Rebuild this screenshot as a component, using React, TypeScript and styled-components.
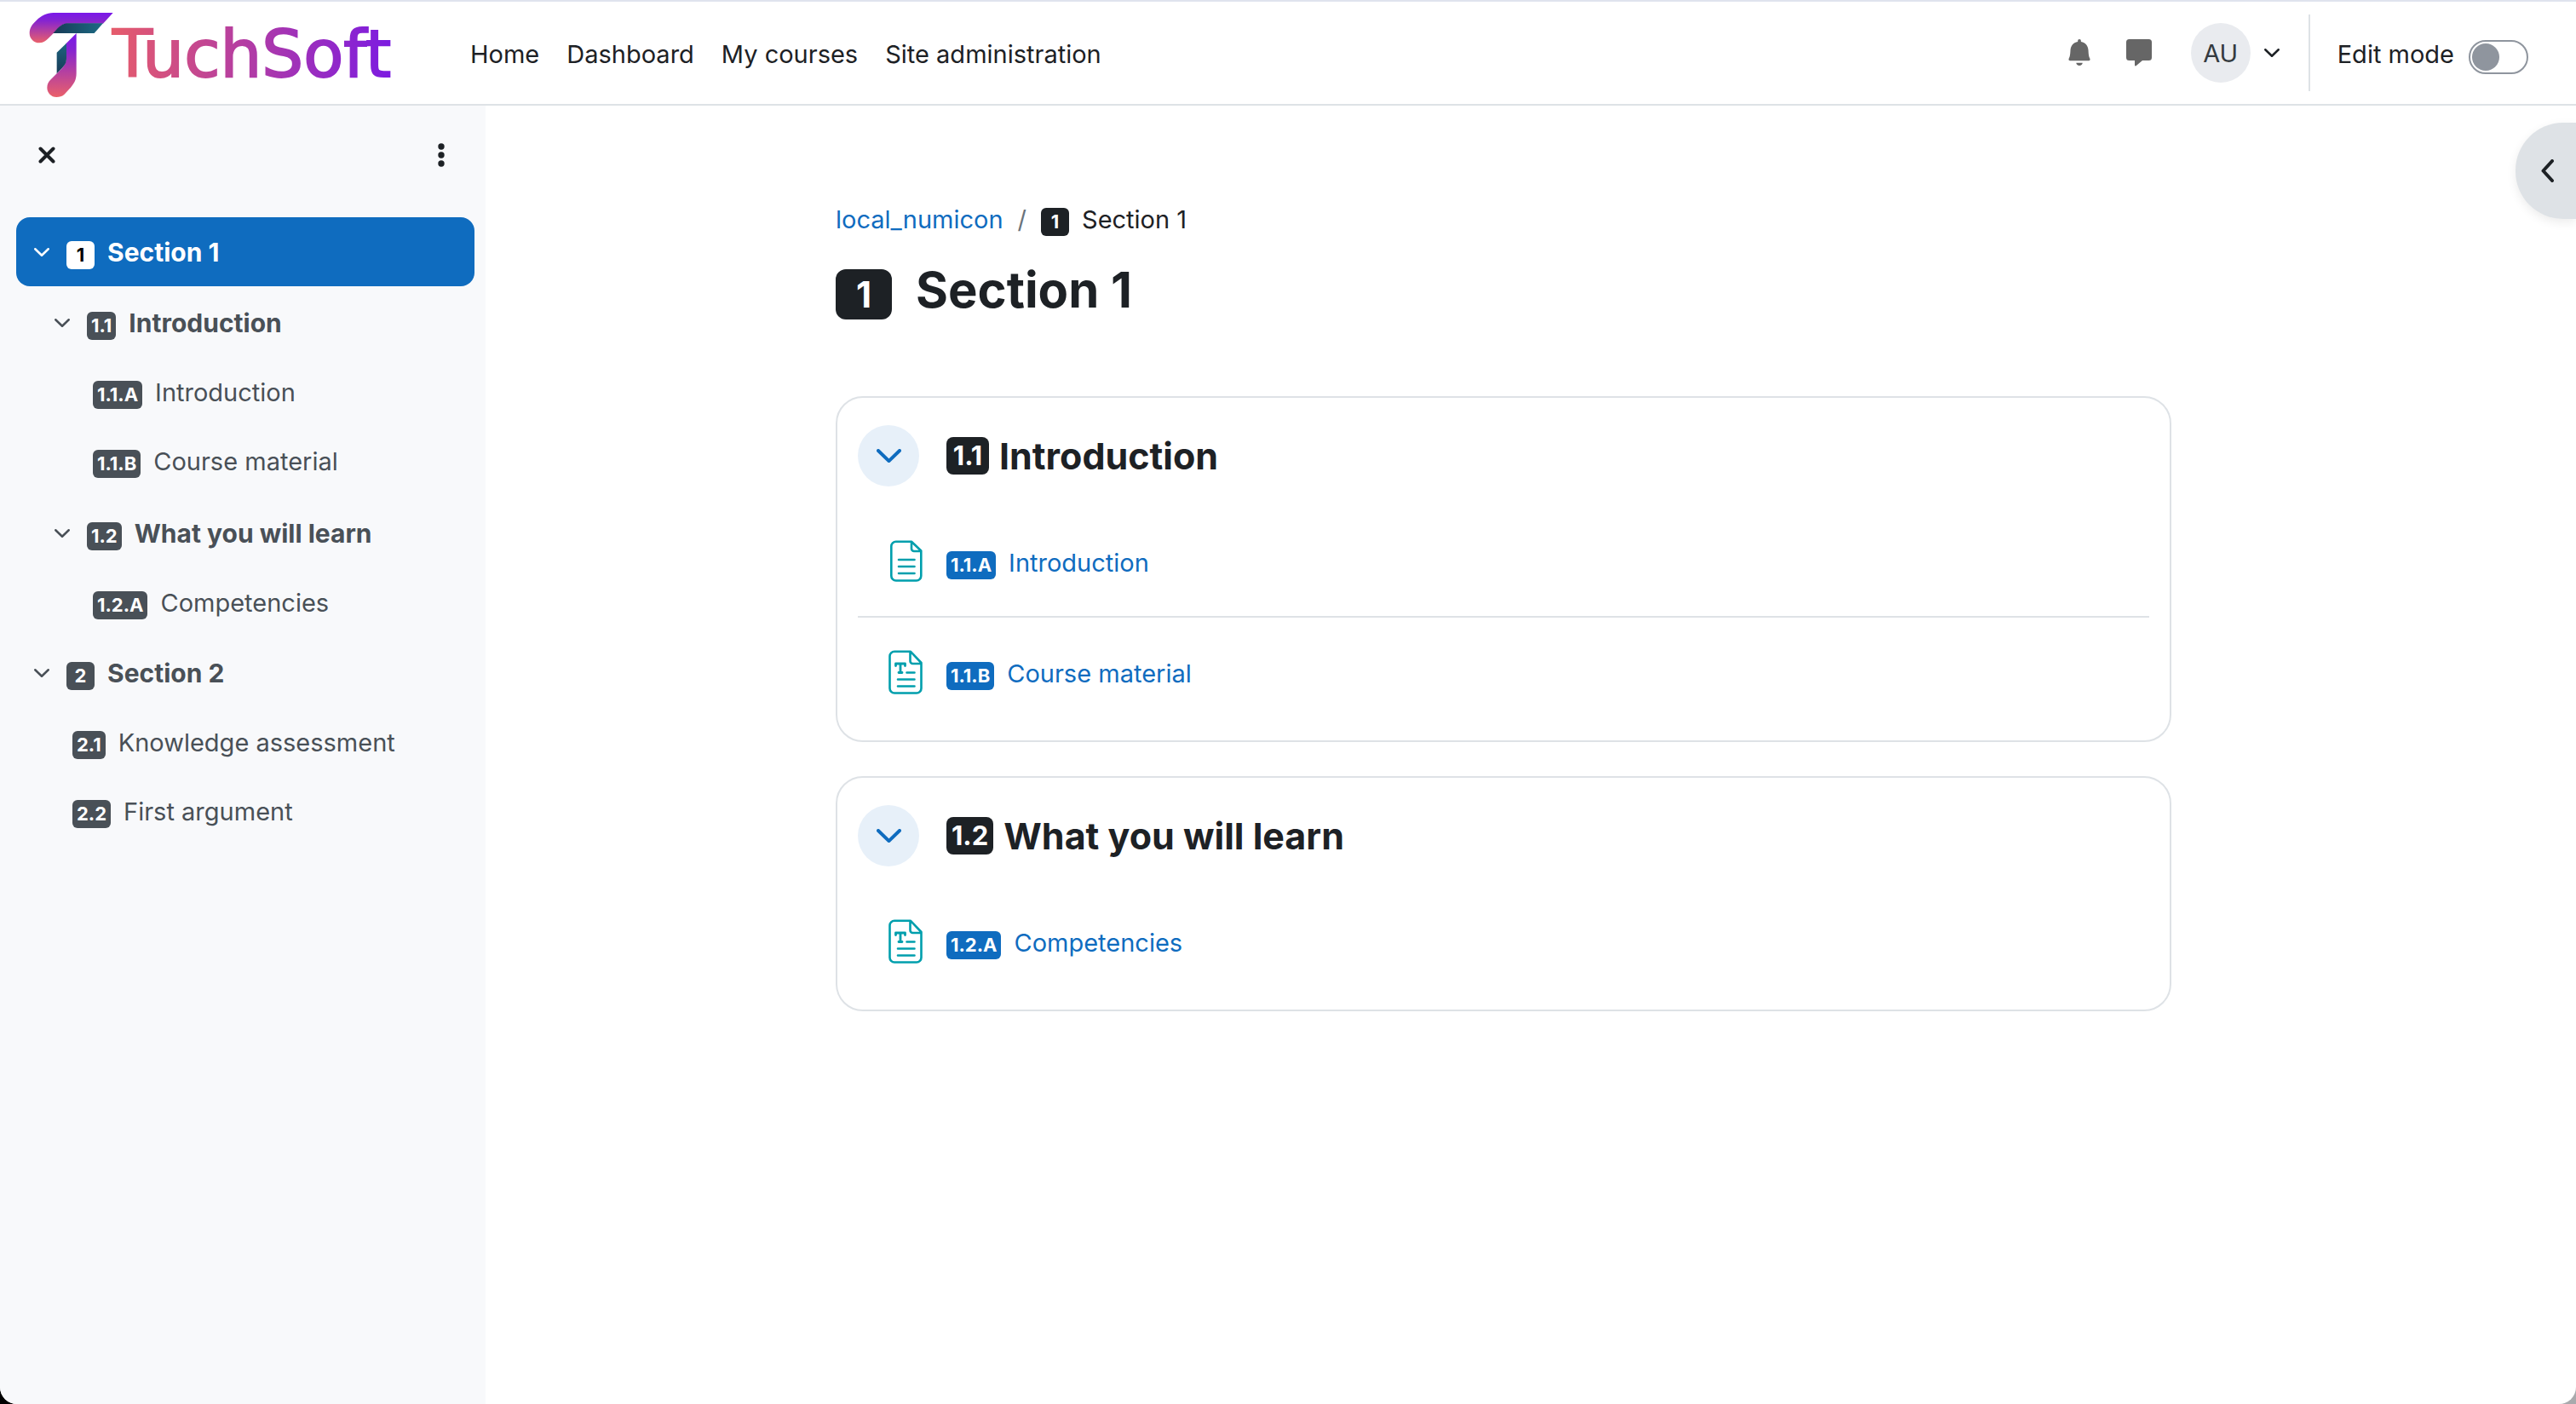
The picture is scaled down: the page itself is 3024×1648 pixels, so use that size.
import React from "react";
import styled, { createGlobalStyle, css } from "styled-components";

const color = {
  ink: "#1d2125",
  muted: "#495057",
  blue: "#0f6cbf",
  line: "#dee2e6",
  panel: "#f8f9fb",
};

const GlobalStyle = createGlobalStyle`
  *, *::before, *::after { box-sizing: border-box; }
  body {
    margin: 0;
    background: linear-gradient(90deg, #000 50%, #a9aaad 50%);
    color: ${color.ink};
    font-family: Inter, "Liberation Sans", sans-serif;
    font-size: 29px;
    line-height: 45px;
  }
  h1, h2, ul, ol { margin: 0; padding: 0; }
  ul, ol { list-style: none; }
  a { color: inherit; text-decoration: none; }
  button {
    border: 0;
    padding: 0;
    background: none;
    color: inherit;
    font: inherit;
    cursor: pointer;
  }
  svg { display: block; }
`;

const Page = styled.div`
  display: flex;
  flex-direction: column;
  min-height: 100vh;
  overflow: hidden;
  background: #fff;
  border-radius: 0 0 20px 20px;
`;

/* ---------- top bar ---------- */

const TopBar = styled.header`
  display: flex;
  align-items: center;
  height: 124px;
  padding: 0 56px 0 32px;
  border-top: 2px solid #dfe3ee;
  border-bottom: 2px solid ${color.line};
`;

const Brand = styled.a`
  display: block;
  width: 444px;
  margin-right: 76px;
`;

const TopLinks = styled.nav`
  display: flex;
  gap: 32px;
  margin-right: auto;
  padding-top: 2px;
`;

const Tools = styled.div`
  display: flex;
  align-items: center;
`;

const ToolButton = styled.button`
  display: grid;
  place-items: center;
  width: 70px;
  height: 70px;
  color: #666;
`;

const UserMenu = styled.button`
  display: flex;
  align-items: center;
  gap: 16px;
  margin: 0 34px 0 26px;
`;

const Avatar = styled.span`
  display: grid;
  place-items: center;
  width: 70px;
  height: 70px;
  border-radius: 50%;
  background: #e9ebef;
  color: #343a40;
`;

const EditMode = styled.label`
  display: flex;
  align-items: center;
  gap: 17px;
  height: 90px;
  padding: 2px 0 0 32px;
  border-left: 2px solid ${color.line};
`;

const Switch = styled.input`
  appearance: none;
  width: 70px;
  height: 40px;
  margin: 8px 0 0;
  padding: 2px;
  border: 2px solid #8f959e;
  border-radius: 20px;
  cursor: pointer;

  &::before {
    content: "";
    display: block;
    width: 32px;
    height: 32px;
    border-radius: 50%;
    background: #8f959e;
  }
  &:checked::before {
    margin-left: auto;
  }
`;

/* ---------- layout ---------- */

const Columns = styled.div`
  display: flex;
  flex: 1;
`;

const Sidebar = styled.aside`
  width: 570px;
  flex: none;
  padding: 22px 13px 22px 19px;
  background: ${color.panel};
`;

const SidebarHead = styled.div`
  display: flex;
  justify-content: space-between;
  margin-bottom: 37px;
  padding-right: 3px;
`;

const HeadButton = styled.button`
  display: grid;
  place-items: center;
  width: 72px;
  height: 72px;
`;

const Main = styled.main`
  position: relative;
  flex: 1;
  padding: 111px 64px 64px 0;
`;

const Content = styled.div`
  max-width: 1568px;
  margin: 0 auto;
`;

const DrawerToggle = styled.button`
  position: absolute;
  top: 20px;
  right: 0;
  display: flex;
  align-items: center;
  width: 71px;
  height: 113px;
  padding-left: 30px;
  border-radius: 56px 0 0 56px;
  background: ${color.line};
  box-shadow: 0 4px 12px rgba(0, 0, 0, 0.08);
`;

/* ---------- number badge ---------- */

type Tone = "dark" | "muted" | "blue" | "light";
type Size = "sm" | "md" | "lg";

const tones: Record<Tone, [string, string]> = {
  dark: [color.ink, "#fff"],
  muted: [color.muted, "#fff"],
  blue: [color.blue, "#fff"],
  light: ["#fff", "#000"],
};

const sizes = {
  sm: css`
    min-width: 33px;
    padding: 5px;
    border-radius: 6px;
    font-size: 22px;
    line-height: 23px;
  `,
  md: css`
    min-width: 50px;
    padding: 6px;
    border-radius: 8px;
    font-size: 31px;
    line-height: 32px;
  `,
  lg: css`
    min-width: 66px;
    padding: 8px;
    border-radius: 12px;
    font-size: 42px;
    line-height: 43px;
  `,
};

const Badge = styled.span<{ $tone: Tone; $size?: Size }>`
  display: inline-block;
  background: ${(p) => tones[p.$tone][0]};
  color: ${(p) => tones[p.$tone][1]};
  font-weight: 700;
  text-align: center;
  ${(p) => sizes[p.$size ?? "sm"]}
`;

/* ---------- course index ---------- */

const IndexRow = styled.div<{ $depth: number; $leaf?: boolean; $active?: boolean }>`
  display: flex;
  align-items: center;
  padding: 17px 16px;
  padding-left: ${(p) => (p.$leaf ? 42 : 14) + p.$depth * 24}px;
  border-radius: 16px;
  background: ${(p) => (p.$active ? color.blue : "transparent")};
  color: ${(p) => (p.$active ? "#fff" : color.muted)};
  font-size: ${(p) => (p.$leaf ? 29 : 30)}px;
  font-weight: ${(p) => (p.$leaf ? 400 : 700)};
`;

const Fold = styled.button`
  display: grid;
  place-items: center;
  width: 32px;
  height: 32px;
  margin-right: 13px;
`;

const NumberedLink = styled.a`
  display: flex;
  align-items: baseline;
  gap: 15px;
  padding-top: 2px;
`;

const SubSection = styled.li`
  padding: 2px 0;
`;

/* ---------- content ---------- */

const Crumbs = styled.ol`
  display: flex;
  align-items: baseline;
  gap: 17px;
  margin-bottom: 24px;

  a { color: ${color.blue}; }
`;

const Crumb = styled.li`
  display: flex;
  align-items: baseline;
  gap: 15px;
`;

const Slash = styled.span`
  color: #6a737b;
`;

const Title = styled.h1`
  display: flex;
  align-items: baseline;
  gap: 28px;
  margin-bottom: 89px;
  font-size: 58px;
  line-height: 72px;
`;

const Card = styled.section`
  margin-bottom: 40px;
  padding: 32px 24px 16px;
  border: 2px solid ${color.line};
  border-radius: 32px;
`;

const CardHead = styled.div`
  display: flex;
  align-items: center;
  gap: 32px;
  margin-bottom: 24px;
`;

const RoundButton = styled.button`
  display: grid;
  place-items: center;
  width: 72px;
  height: 72px;
  border-radius: 50%;
  background: #e7f0f9;
  color: ${color.blue};
`;

const CardTitle = styled.h2`
  display: flex;
  align-items: center;
  gap: 12px;
  font-size: 43px;
  line-height: 54px;
`;

const Activity = styled.li`
  display: flex;
  align-items: center;
  gap: 22px;
  height: 128px;
  padding-left: 32px;
  color: ${color.blue};

  & + & {
    height: 130px;
    border-top: 2px solid ${color.line};
  }
`;

/* ---------- drawings ---------- */

const Logo = () => (
  <svg width="444" height="104" viewBox="0 0 444 104" role="img" aria-label="TuchSoft">
    <defs>
      <linearGradient id="arm" x1="0" y1="0" x2="0" y2="1">
        <stop offset="0" stopColor="#7a17ea" />
        <stop offset="0.25" stopColor="#8423d2" />
        <stop offset="1" stopColor="#ea606a" />
      </linearGradient>
      <linearGradient id="shade" x1="0" y1="0" x2="1" y2="0">
        <stop offset="0" stopColor="#173a56" />
        <stop offset="1" stopColor="#1d6b84" />
      </linearGradient>
      <linearGradient id="shadeDown" x1="0" y1="0" x2="0" y2="1">
        <stop offset="0" stopColor="#1d6580" />
        <stop offset="1" stopColor="#173a56" />
      </linearGradient>
      <linearGradient id="word" gradientUnits="userSpaceOnUse" x1="98" y1="0" x2="442" y2="0">
        <stop offset="0" stopColor="#e65c6b" />
        <stop offset="1" stopColor="#7718e6" />
      </linearGradient>
    </defs>
    <g transform="translate(1 3) scale(0.3333) translate(-36 -39)">
      <path d="M335 45H125C100 45 82 56 66 71C54 82 41 95 41 116C41 136 56 151 75 151C88 151 97 145 105 137L152 91Q160 83 172 83H300Z" fill="url(#arm)" />
      <path d="M300 82H178C160 82 150 90 140 100L124 117H269Z" fill="url(#shade)" />
      <path d="M206 117V258C206 282 197 295 186 308L163 333C155 340 147 342 136 342C117 342 103 327 103 309C103 297 108 288 116 280L152 244C164 232 170 222 170 205V153Z" fill="url(#arm)" />
      <path d="M171 152L137 185V259L156 239C167 228 171 220 171 205Z" fill="url(#shadeDown)" />
    </g>
    <text x="100" y="80" fill="url(#word)" stroke="url(#word)" strokeWidth="2" fontFamily="DejaVu Sans, sans-serif" fontSize="77">
      TuchSoft
    </text>
  </svg>
);

const Bell = () => (
  <svg width="28" height="38" viewBox="0 0 28 38" fill="currentColor">
    <path d="M14 0a2 2 0 0 1 2 2v1.500c6 1.300 9 6 9.300 12 .3 7 .9 9.500 2 11.500.6 1.500 0 3-1.500 3H2.200c-1.500 0-2.100-1.500-1.500-3 1.100-2 1.700-4.500 2-11.500C3 9.500 6 4.800 12 3.500V2a2 2 0 0 1 2-2zM10 33h8c0 2-1.800 4-4 4s-4-2-4-4z" transform="translate(1 3) scale(0.93 0.84)" />
  </svg>
);

const Bubble = () => (
  <svg width="30" height="38" viewBox="0 0 30 38" fill="currentColor">
    <path d="M3.500 3h23A3.500 3.500 0 0 1 30 6.500v18a3.500 3.500 0 0 1-3.500 3.500H19l-7.500 6.300c-.6.500-1.500.2-1.500-.8V28H3.500A3.500 3.500 0 0 1 0 24.500v-18A3.500 3.500 0 0 1 3.500 3z" />
  </svg>
);

const Chevron = ({ width = 18, stroke = 2.5 }: { width?: number; stroke?: number }) => (
  <svg
    width={width}
    height={(width * 10) / 18}
    viewBox={`0 0 ${width} ${(width * 10) / 18}`}
    fill="none"
    stroke="currentColor"
    strokeWidth={stroke}
    strokeLinecap="round"
    strokeLinejoin="round"
  >
    <path
      d={`M${stroke / 2} ${stroke / 2}L${width / 2} ${(width * 10) / 18 - stroke / 2}L${width - stroke / 2} ${stroke / 2}`}
    />
  </svg>
);

const ChevronLeft = () => (
  <svg width="15" height="27" viewBox="0 0 15 27" fill="none" stroke="currentColor" strokeWidth="4" strokeLinecap="round" strokeLinejoin="round">
    <path d="M13 2L2.500 13.500L13 25" />
  </svg>
);

const Cross = () => (
  <svg width="20" height="20" viewBox="0 0 20 20" stroke="currentColor" strokeWidth="4" strokeLinecap="round">
    <path d="M2.500 2.500L17.500 17.500M17.500 2.500L2.500 17.500" />
  </svg>
);

const Dots = () => (
  <svg width="8" height="28" viewBox="0 0 8 28" fill="currentColor">
    <circle cx="4" cy="4" r="3.700" />
    <circle cx="4" cy="14" r="3.700" />
    <circle cx="4" cy="24" r="3.700" />
  </svg>
);

const PageIcon = ({ kind }: { kind: "page" | "text" }) => (
  <svg width="50" height="56" viewBox="0 0 50 56" fill="none" stroke="#009fad" strokeWidth="2.600" strokeLinecap="round" strokeLinejoin="round">
    {kind === "page" ? (
      <>
        <path d="M31 4.800H12.800a5.500 5.500 0 0 0-5.500 5.500V45a5.500 5.500 0 0 0 5.500 5.500h24a5.500 5.500 0 0 0 5.500-5.500V15.500zM31 4.800V13a3 3 0 0 0 3 3h8" />
        <path d="M16 26h18.500M16 34h18.500M16 42h18.500" />
      </>
    ) : (
      <g transform="translate(0 1)">
        <path d="M30 2.800H11a5.500 5.500 0 0 0-5.500 5.500V46a5.500 5.500 0 0 0 5.500 5.500h26a5.500 5.500 0 0 0 5.500-5.500V16zM29.500 2.800V14a3 3 0 0 0 3 3h10" />
        <path d="M25.500 27.500h9M15 35.500h19.500M15 43.500h19.500" />
        <path d="M12.500 19.500v-2.500h11V19.500M18 17V27.500M16 27.500h4" strokeWidth="2.800" />
      </g>
    )}
  </svg>
);

/* ---------- data ---------- */

type Item = { num: string; name: string; icon?: "page" | "text"; items?: Item[] };

const course: Item[] = [
  {
    num: "1",
    name: "Section 1",
    items: [
      {
        num: "1.1",
        name: "Introduction",
        items: [
          { num: "1.1.A", name: "Introduction", icon: "page" },
          { num: "1.1.B", name: "Course material", icon: "text" },
        ],
      },
      {
        num: "1.2",
        name: "What you will learn",
        items: [{ num: "1.2.A", name: "Competencies", icon: "text" }],
      },
    ],
  },
  {
    num: "2",
    name: "Section 2",
    items: [
      { num: "2.1", name: "Knowledge assessment" },
      { num: "2.2", name: "First argument" },
    ],
  },
];

const current = course[0];

const IndexEntry = ({ item, depth }: { item: Item; depth: number }) => {
  const active = item === current;
  const Wrapper = depth === 1 && item.items ? SubSection : "li";
  return (
    <Wrapper>
      <IndexRow $depth={depth} $leaf={!item.items} $active={active}>
        {item.items && (
          <Fold type="button" aria-label={`Collapse ${item.name}`}>
            <Chevron />
          </Fold>
        )}
        <NumberedLink href="#">
          <Badge $tone={active ? "light" : "muted"}>{item.num}</Badge>
          {item.name}
        </NumberedLink>
      </IndexRow>
      {item.items && (
        <ul>
          {item.items.map((child) => (
            <IndexEntry key={child.num} item={child} depth={depth + 1} />
          ))}
        </ul>
      )}
    </Wrapper>
  );
};

export default function App() {
  return (
    <>
      <GlobalStyle />
      <Page>
        <TopBar>
          <Brand href="#">
            <Logo />
          </Brand>
          <TopLinks>
            <a href="#">Home</a>
            <a href="#">Dashboard</a>
            <a href="#">My courses</a>
            <a href="#">Site administration</a>
          </TopLinks>
          <Tools>
            <ToolButton type="button" aria-label="Notifications">
              <Bell />
            </ToolButton>
            <ToolButton type="button" aria-label="Messages">
              <Bubble />
            </ToolButton>
            <UserMenu type="button" aria-label="User menu">
              <Avatar>AU</Avatar>
              <Chevron width={18} />
            </UserMenu>
            <EditMode htmlFor="edit-mode">
              Edit mode
              <Switch id="edit-mode" type="checkbox" />
            </EditMode>
          </Tools>
        </TopBar>

        <Columns>
          <Sidebar>
            <SidebarHead>
              <HeadButton type="button" aria-label="Close course index">
                <Cross />
              </HeadButton>
              <HeadButton type="button" aria-label="Course index options">
                <Dots />
              </HeadButton>
            </SidebarHead>
            <ul>
              {course.map((item) => (
                <IndexEntry key={item.num} item={item} depth={0} />
              ))}
            </ul>
          </Sidebar>

          <Main>
            <DrawerToggle type="button" aria-label="Open block drawer">
              <ChevronLeft />
            </DrawerToggle>
            <Content>
              <Crumbs>
                <Crumb>
                  <a href="#">local_numicon</a>
                </Crumb>
                <Crumb>
                  <Slash>/</Slash>
                </Crumb>
                <Crumb>
                  <Badge $tone="dark">{current.num}</Badge>
                  {current.name}
                </Crumb>
              </Crumbs>
              <Title>
                <Badge $tone="dark" $size="lg">{current.num}</Badge>
                {current.name}
              </Title>
              {current.items?.map((section) => (
                <Card key={section.num}>
                  <CardHead>
                    <RoundButton type="button" aria-label={`Collapse ${section.name}`}>
                      <Chevron width={29} stroke={4} />
                    </RoundButton>
                    <CardTitle>
                      <Badge $tone="dark" $size="md">{section.num}</Badge>
                      {section.name}
                    </CardTitle>
                  </CardHead>
                  <ul>
                    {section.items?.map((activity) => (
                      <Activity key={activity.num}>
                        <PageIcon kind={activity.icon ?? "page"} />
                        <NumberedLink href="#">
                          <Badge $tone="blue">{activity.num}</Badge>
                          {activity.name}
                        </NumberedLink>
                      </Activity>
                    ))}
                  </ul>
                </Card>
              ))}
            </Content>
          </Main>
        </Columns>
      </Page>
    </>
  );
}
